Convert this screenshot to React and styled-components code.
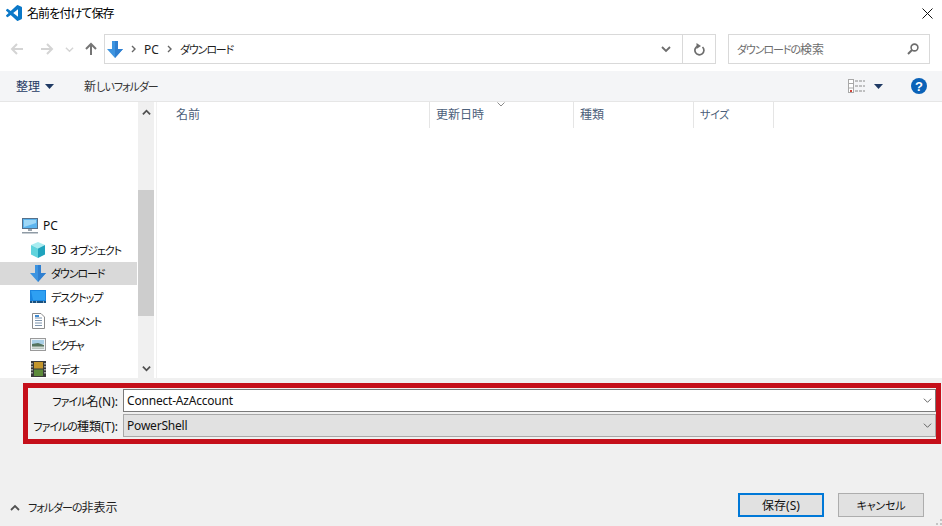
import React from "react";
import styled, { createGlobalStyle } from "styled-components";

const GlobalStyle = createGlobalStyle`
  html, body {
    margin: 0;
    padding: 0;
    background: #fff;
  }
  body {
    font-family: "Noto Sans", "Noto Sans CJK JP", sans-serif;
    font-size: 12px;
    font-feature-settings: "palt";
    color: #000;
  }
  * {
    box-sizing: border-box;
  }
`;

const Chevron = ({ up, size = 10, color = "#6d6d6d", width = 1.8 }) => (
  <svg width={size} height={size} viewBox="0 0 10 10" style={{ display: "block" }}>
    <path
      d={up ? "M1 7 L5 3 L9 7" : "M1 3 L5 7 L9 3"}
      fill="none"
      stroke={color}
      strokeWidth={width}
    />
  </svg>
);

const Caret = () => (
  <svg width="9" height="5" viewBox="0 0 9 5" style={{ display: "block" }}>
    <path d="M0 0 H9 L4.5 5 Z" fill="#1f3a64" />
  </svg>
);

const Arrow = ({ dir, color }) => {
  const paths = {
    left: "M13 7 H2 M7 2 L2 7 L7 12",
    right: "M1 7 H12 M7 2 L12 7 L7 12",
    up: "M7 13 V2 M2 7 L7 2 L12 7",
  };
  return (
    <svg width="14" height="14" viewBox="0 0 14 14" style={{ display: "block" }}>
      <path d={paths[dir]} fill="none" stroke={color} strokeWidth="2" />
    </svg>
  );
};

const DownloadIcon = () => (
  <svg width="16" height="17" viewBox="0 0 16 17" style={{ display: "block" }}>
    <path d="M5 0 H11 V8 H16 L8 17 L0 8 H5 Z" fill="#3d94e0" />
    <path d="M8 0 H11 V8 H16 L8 17 Z" fill="#2f7fd0" />
  </svg>
);

const VsCodeLogo = () => (
  <svg width="16" height="16" viewBox="0 0 24 24" style={{ display: "block" }}>
    <path
      fill="#0b78c8"
      d="M23.15 2.587L18.21.21a1.494 1.494 0 0 0-1.705.29l-9.46 8.63-4.12-3.128a.999.999 0 0 0-1.276.057L.327 7.261A1 1 0 0 0 .326 8.74L3.899 12 .326 15.26a1 1 0 0 0 .001 1.479L1.65 17.94a.999.999 0 0 0 1.276.057l4.12-3.128 9.46 8.63a1.492 1.492 0 0 0 1.704.29l4.942-2.377A1.5 1.5 0 0 0 24 20.06V3.939a1.5 1.5 0 0 0-.85-1.352zm-5.146 14.861L10.826 12l7.178-5.448v10.896z"
    />
  </svg>
);

const PcIcon = () => (
  <svg width="16" height="16" viewBox="0 0 16 16" style={{ display: "block" }}>
    <rect x="0.5" y="0.5" width="15" height="10" fill="#5cb4ee" stroke="#56708a" />
    <path d="M2 2 H14 V5 L2 9 Z" fill="#9fd8f7" />
    <rect x="6" y="11" width="4" height="2" fill="#9aa5ae" />
    <rect x="0" y="14" width="16" height="1.5" fill="#8f9ba5" />
  </svg>
);

const CubeIcon = () => (
  <svg width="16" height="16" viewBox="0 0 16 16" style={{ display: "block" }}>
    <path d="M8 0 L15 3 L8 6.5 L1 3 Z" fill="#a8ecf0" />
    <path d="M1 3 L8 6.5 V16 L1 12.5 Z" fill="#5fd3dc" />
    <path d="M15 3 L8 6.5 V16 L15 12.5 Z" fill="#1fa3bd" />
  </svg>
);

const DesktopIcon = () => (
  <svg width="16" height="14" viewBox="0 0 16 14" style={{ display: "block" }}>
    <rect width="16" height="12" fill="#1a86e0" />
    <path d="M0 11 H16 V13 H0 Z" fill="#17507f" />
    <path d="M1 1 H15 V10 H3 Z" fill="#2ea0f2" />
    <path d="M2 12 h1 M6 12 h1 M13 12 h1" stroke="#fff" strokeWidth="1" />
  </svg>
);

const DocumentIcon = () => (
  <svg width="13" height="16" viewBox="0 0 13 16" style={{ display: "block" }}>
    <path d="M0.5 0.5 H9 L12.5 4 V15.5 H0.5 Z" fill="#fff" stroke="#8b8b8b" />
    <path d="M3 5 H10 M3 7.5 H10 M3 10 H10 M3 12.5 H10" stroke="#7f95ad" />
    <path d="M3 2 H7 V4 H3 Z" fill="#3f8ad0" />
  </svg>
);

const PictureIcon = () => (
  <svg width="16" height="13" viewBox="0 0 16 13" style={{ display: "block" }}>
    <rect x="0.5" y="0.5" width="15" height="12" fill="#eef3f6" stroke="#9a9a9a" />
    <rect x="2" y="2" width="12" height="4" fill="#a9cfe6" />
    <path d="M2 6 L8 5 L14 7 V10.5 H2 Z" fill="#54745f" />
    <rect x="2" y="8.5" width="12" height="2" fill="#cfd8d2" />
  </svg>
);

const VideoIcon = () => (
  <svg width="15" height="16" viewBox="0 0 15 16" style={{ display: "block" }}>
    <rect width="15" height="16" fill="#3a3a3a" />
    <rect x="3" y="1" width="9" height="6.5" fill="#c4962c" />
    <rect x="3" y="8.5" width="9" height="6.5" fill="#5c8a3a" />
    <path d="M1 2 V14 M14 2 V14" stroke="#e8e8e8" strokeWidth="1.2" strokeDasharray="1.5 1.5" />
  </svg>
);

const CrumbChevron = () => (
  <svg width="5" height="8" viewBox="0 0 5 8" style={{ display: "block" }}>
    <path d="M1 1 L4 4 L1 7" fill="none" stroke="#666" strokeWidth="1.4" />
  </svg>
);

// kana in the dialog font is much tighter than Noto's, so runs of it get squeezed
const Kana = styled.span`
  font-size: 11px;
  letter-spacing: ${(p) => p.$track ?? -1}px;
`;

const Window = styled.div`
  width: 942px;
  height: 526px;
  display: flex;
  flex-direction: column;
  overflow: hidden;
  background: #fff;
`;

const TitleBar = styled.div`
  height: 28px;
  padding: 0 8px 2px 6px;
  display: flex;
  align-items: center;
  gap: 5px;
`;

const TitleText = styled.span`
  flex: 1;
  font-size: 12px;
  letter-spacing: -0.9px;
`;

const CloseIcon = styled.svg`
  display: block;
  margin-right: 1px;
`;

const NavRow = styled.div`
  height: 43px;
  padding: 6px 12px 7px 10px;
  display: flex;
  align-items: stretch;
`;

const NavButtons = styled.div`
  width: 94px;
  display: flex;
  align-items: center;
`;

const NavSlot = styled.span`
  width: ${(p) => p.$w}px;
  display: flex;
`;

const AddressBox = styled.div`
  width: 612px;
  border: 1px solid #d9d9d9;
  display: flex;
  align-items: center;
  padding-left: 2px;
`;

const Crumbs = styled.div`
  flex: 1;
  display: flex;
  align-items: center;
  color: #1e1e1e;
`;

const CrumbSep = styled.span`
  margin: 0 8px;
`;

const AddressButton = styled.div`
  width: ${(p) => p.$w}px;
  align-self: stretch;
  display: flex;
  align-items: center;
  justify-content: center;
  border-left: ${(p) => (p.$divided ? "1px solid #d9d9d9" : "none")};
`;

const SearchBox = styled.div`
  width: 202px;
  margin-left: 12px;
  border: 1px solid #d9d9d9;
  display: flex;
  align-items: center;
  justify-content: space-between;
  padding: 0 10px 0 8px;
  color: #6d6d6d;
`;

const Toolbar = styled.div`
  height: 31px;
  background: #f4f5f7;
  border-bottom: 1px solid #e6e6e6;
  display: flex;
  align-items: center;
  padding: 0 15px 0 16px;
`;

const ToolLabel = styled.span`
  color: ${(p) => p.$color || "#333"};
`;

const ToolCaret = styled.span`
  margin: 1px 30px 0 5px;
`;

const ToolSpacer = styled.div`
  flex: 1;
`;

const ViewCaret = styled.span`
  margin: 0 28px 0 9px;
`;

const HelpBadge = styled.span`
  width: 16px;
  height: 16px;
  border-radius: 50%;
  background: #0a62b8;
  color: #fff;
  font-family: "Liberation Sans", sans-serif;
  font-weight: 700;
  font-size: 13px;
  display: flex;
  align-items: center;
  justify-content: center;
`;

const Body = styled.div`
  height: 276px;
  display: flex;
`;

const Sidebar = styled.nav`
  width: 138px;
  padding-top: 112px;
  overflow: hidden;
`;

const TreeRow = styled.div`
  height: 23.8px;
  display: flex;
  align-items: center;
  white-space: pre;
  padding-left: ${(p) => (p.$root ? 22 : 30)}px;
  margin-right: 1px;
  background: ${(p) => (p.$selected ? "#d9d9d9" : "transparent")};
  color: #111;
`;

const TreeIcon = styled.span`
  width: 16px;
  display: flex;
  justify-content: center;
  margin-right: 5px;
`;

const Scrollbar = styled.div`
  width: 16px;
  background: #f0f0f0;
  display: grid;
  grid-template-rows: 20px 68px 126px 1fr 20px;
  justify-items: center;
  align-items: center;
`;

const ScrollThumb = styled.div`
  grid-row: 3;
  width: 100%;
  height: 100%;
  background: #cdcdcd;
`;

const ScrollEnd = styled.div`
  grid-row: ${(p) => p.$row};
`;

const FilePane = styled.section`
  flex: 1;
  margin-left: 2px;
  border-left: 1px solid #f1f1f1;
`;

const HeaderRow = styled.div`
  height: 26px;
  display: grid;
  grid-template-columns: 273px 144px 120px 80px;
`;

const HeaderCell = styled.div`
  position: relative;
  border-right: 1px solid #e5e5e5;
  padding: 4px 0 0 ${(p) => p.$pad}px;
  color: #4c607a;
  line-height: 17px;
`;

const SortMark = styled.span`
  position: absolute;
  top: 0;
  left: 67px;
`;

const BottomPanel = styled.div`
  flex: 1;
  position: relative;
  background: #f0f0f0;
  padding-top: 5px;
  display: flex;
  flex-direction: column;
`;

const Highlight = styled.div`
  margin-left: 23px;
  width: 918px;
  height: 61px;
  border: 5px solid #c50f1a;
  padding: 1px 0 0 0;
  display: grid;
  grid-template-columns: 90px 1fr;
  grid-auto-rows: 23px;
  row-gap: 2px;
`;

const FieldLabel = styled.label`
  display: flex;
  align-items: center;
  justify-content: flex-end;
  white-space: nowrap;
  color: #111;
`;

const Field = styled.div`
  margin-left: 5px;
  border: 1px solid ${(p) => (p.$select ? "#a8a8a8" : "#7a7a7a")};
  background: ${(p) => (p.$select ? "#e1e1e1" : "#fff")};
  display: flex;
  align-items: center;
  justify-content: space-between;
  padding: 0 3px 0 3px;
  color: #111;
  letter-spacing: -0.2px;
`;

const Footer = styled.div`
  display: flex;
  justify-content: space-between;
  align-items: flex-end;
  padding: 49px 18px 0 10px;
`;

const HideFolders = styled.div`
  display: flex;
  align-items: center;
  gap: 8px;
  color: #1e1e1e;
  line-height: 18px;
`;

const Buttons = styled.div`
  display: flex;
  gap: 14px;
`;

const DialogButton = styled.button`
  width: 86px;
  height: 24px;
  padding: 0;
  background: #e1e1e1;
  border: ${(p) => (p.$primary ? "2px solid #0078d7" : "1px solid #adadad")};
  font: inherit;
  color: #111;
`;

const Grip = styled.svg`
  position: absolute;
  right: 0;
  bottom: 0;
`;

const tree = [
  { prefix: "3D ", label: "オブジェクト", track: -1.1, icon: <CubeIcon /> },
  { label: "ダウンロード", track: -1.1, icon: <DownloadIcon />, selected: true },
  { label: "デスクトップ", track: -0.95, icon: <DesktopIcon /> },
  { label: "ドキュメント", track: -1, icon: <DocumentIcon /> },
  { label: "ピクチャ", track: -1.75, icon: <PictureIcon /> },
  { label: "ビデオ", track: -1, icon: <VideoIcon /> },
];

const columns = [
  { label: "名前", pad: 19 },
  { label: "更新日時", pad: 6, sorted: true },
  { label: "種類", pad: 6 },
  { kana: "サイズ", pad: 6 },
];

function App() {
  return (
    <Window>
      <GlobalStyle />
      <TitleBar>
        <VsCodeLogo />
        <TitleText>名前を付けて保存</TitleText>
        <CloseIcon width="11" height="11" viewBox="0 0 11 11">
          <path d="M0.5 0.5 L10.5 10.5 M10.5 0.5 L0.5 10.5" stroke="#111" strokeWidth="1" />
        </CloseIcon>
      </TitleBar>

      <NavRow>
        <NavButtons>
          <NavSlot $w={30}>
            <Arrow dir="left" color="#d4d4d4" />
          </NavSlot>
          <NavSlot $w={25}>
            <Arrow dir="right" color="#d4d4d4" />
          </NavSlot>
          <NavSlot $w={19}>
            <Chevron size={9} color="#d4d4d4" width={1.5} />
          </NavSlot>
          <NavSlot $w={20}>
            <Arrow dir="up" color="#757575" />
          </NavSlot>
        </NavButtons>
        <AddressBox>
          <Crumbs>
            <DownloadIcon />
            <CrumbSep>
              <CrumbChevron />
            </CrumbSep>
            <span>PC</span>
            <CrumbSep>
              <CrumbChevron />
            </CrumbSep>
            <Kana $track={-1.1}>ダウンロード</Kana>
          </Crumbs>
          <AddressButton $w={32}>
            <Chevron size={10} color="#6d6d6d" width={1.8} />
          </AddressButton>
          <AddressButton $w={33} $divided>
            <svg width="12" height="13" viewBox="0 0 12 13" style={{ display: "block" }}>
              <path d="M9.5 4 A4.5 4.5 0 1 1 5 3" fill="none" stroke="#6d6d6d" strokeWidth="1.7" />
              <path d="M3.5 0 L8 3 L3.5 6 Z" fill="#6d6d6d" />
            </svg>
          </AddressButton>
        </AddressBox>
        <SearchBox>
          <span>
            <Kana $track={-1.1}>ダウンロードの</Kana>検索
          </span>
          <svg width="12" height="12" viewBox="0 0 12 12" style={{ display: "block" }}>
            <circle cx="7.5" cy="4.5" r="3.4" fill="none" stroke="#6d6d6d" strokeWidth="1.6" />
            <path d="M5 7 L1 11" stroke="#6d6d6d" strokeWidth="2" />
          </svg>
        </SearchBox>
      </NavRow>

      <Toolbar>
        <ToolLabel $color="#1f3a64">整理</ToolLabel>
        <ToolCaret>
          <Caret />
        </ToolCaret>
        <ToolLabel>
          新<Kana>しいフォルダー</Kana>
        </ToolLabel>
        <ToolSpacer />
        <svg width="17" height="14" viewBox="0 0 17 14" style={{ display: "block" }}>
          <rect x="0.5" y="0.5" width="5" height="13" fill="#fff" stroke="#a8a8a8" />
          <path d="M1 4.5 H5 M1 9 H5" stroke="#a8a8a8" />
          <rect x="2" y="11" width="2" height="2" fill="#d0453a" />
          <path d="M7 2 H17 M7 7 H17 M7 12 H17" stroke="#8a8a8a" strokeDasharray="3 1" />
        </svg>
        <ViewCaret>
          <Caret />
        </ViewCaret>
        <HelpBadge>?</HelpBadge>
      </Toolbar>

      <Body>
        <Sidebar>
          <TreeRow $root>
            <TreeIcon>
              <PcIcon />
            </TreeIcon>
            PC
          </TreeRow>
          {tree.map(({ prefix, label, track, icon, selected }) => (
            <TreeRow key={label} $selected={selected}>
              <TreeIcon>{icon}</TreeIcon>
              {prefix}
              <Kana $track={track}>{label}</Kana>
            </TreeRow>
          ))}
        </Sidebar>
        <Scrollbar>
          <ScrollEnd $row={1}>
            <Chevron up size={9} color="#505050" width={2} />
          </ScrollEnd>
          <ScrollThumb />
          <ScrollEnd $row={5}>
            <Chevron size={9} color="#505050" width={2} />
          </ScrollEnd>
        </Scrollbar>
        <FilePane>
          <HeaderRow>
            {columns.map(({ label, kana, pad, sorted }) => (
              <HeaderCell key={label || kana} $pad={pad}>
                {label}
                {kana && <Kana $track={-0.3}>{kana}</Kana>}
                {sorted && (
                  <SortMark>
                    <svg width="8" height="5" viewBox="0 0 8 5" style={{ display: "block" }}>
                      <path d="M0.5 0.5 L4 4 L7.5 0.5" fill="none" stroke="#8a8a8a" />
                    </svg>
                  </SortMark>
                )}
              </HeaderCell>
            ))}
          </HeaderRow>
        </FilePane>
      </Body>

      <BottomPanel>
        <Highlight>
          <FieldLabel>
            <span>
              <Kana>ファイル</Kana>名(N):
            </span>
          </FieldLabel>
          <Field>
            Connect-AzAccount
            <Chevron size={9} color="#555" width={1} />
          </Field>
          <FieldLabel>
            <span>
              <Kana>ファイルの</Kana>種類(T):
            </span>
          </FieldLabel>
          <Field $select>
            PowerShell
            <Chevron size={9} color="#555" width={1} />
          </Field>
        </Highlight>
        <Footer>
          <HideFolders>
            <Chevron up size={10} color="#505050" width={1.8} />
            <span>
              <Kana>フォルダーの</Kana>非表示
            </span>
          </HideFolders>
          <Buttons>
            <DialogButton $primary>保存(S)</DialogButton>
            <DialogButton>
              <Kana $track={-0.2}>キャンセル</Kana>
            </DialogButton>
          </Buttons>
        </Footer>
        <Grip width="7" height="7" viewBox="0 0 7 7">
          <path d="M5 0 h2 v2 h-2 z M1 4 h2 v2 h-2 z M5 4 h2 v2 h-2 z" fill="#c4c4c4" />
        </Grip>
      </BottomPanel>
    </Window>
  );
}

export default App;
